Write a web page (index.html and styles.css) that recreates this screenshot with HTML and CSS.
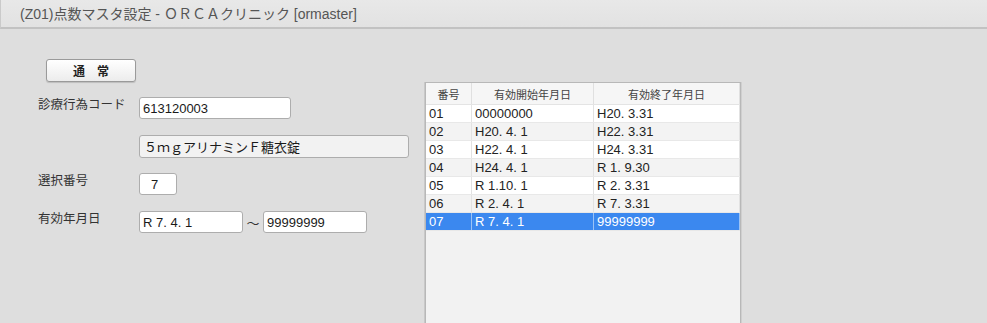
FILE: index.html
```html
<!DOCTYPE html>
<html lang="ja">
<head>
<meta charset="UTF-8">
<meta name="viewport" content="width=device-width, initial-scale=1.0">
<title>(Z01)点数マスタ設定</title>
<link rel="stylesheet" href="styles.css">
</head>
<body>
<div class="titlebar">(Z01)点数マスタ設定 - ＯＲＣＡクリニック [ormaster]</div>

<div class="main">
    <div class="left">
        <button type="button" class="mode-btn">通　常</button>

        <div class="form-grid">
            <label class="lbl" for="code">診療行為コード</label>
            <div class="row"><input type="text" id="code" class="field w-code" value="613120003"></div>

            <span class="lbl"></span>
            <div class="row"><input type="text" class="field w-name readonly" value="５ｍｇアリナミンＦ糖衣錠" readonly></div>

            <label class="lbl" for="sel">選択番号</label>
            <div class="row"><input type="text" id="sel" class="field w-sel" value="7"></div>

            <label class="lbl" for="from">有効年月日</label>
            <div class="row">
                <input type="text" id="from" class="field w-date" value="R 7. 4. 1">
                <span class="tilde">～</span>
                <input type="text" class="field w-date" value="99999999">
            </div>
        </div>
    </div>

    <div class="list">
        <table>
            <thead>
                <tr><th class="c1">番号</th><th class="c2">有効開始年月日</th><th class="c3">有効終了年月日</th></tr>
            </thead>
            <tbody>
                <tr><td>01</td><td>00000000</td><td>H20. 3.31</td></tr>
                <tr><td>02</td><td>H20. 4. 1</td><td>H22. 3.31</td></tr>
                <tr><td>03</td><td>H22. 4. 1</td><td>H24. 3.31</td></tr>
                <tr><td>04</td><td>H24. 4. 1</td><td>R 1. 9.30</td></tr>
                <tr><td>05</td><td>R 1.10. 1</td><td>R 2. 3.31</td></tr>
                <tr><td>06</td><td>R 2. 4. 1</td><td>R 7. 3.31</td></tr>
                <tr class="selected"><td>07</td><td>R 7. 4. 1</td><td>99999999</td></tr>
            </tbody>
        </table>
    </div>
</div>
</body>
</html>
```

FILE: styles.css
```css
body {
    margin: 0;
    height: 323px;
    overflow: hidden;
    background-color: #dedede;
    font-family: "Liberation Sans", "Noto Sans CJK JP", sans-serif;
    color: #222;
}

.titlebar {
    height: 27px;
    line-height: 28px;
    padding-left: 19px;
    font-size: 14px;
    color: #555;
    background: linear-gradient(#e8e8e8, #e2e2e2);
    border-left: 1px solid #cacaca;
    border-bottom: 2px solid #c2c2c2;
}

.main {
    display: flex;
}

.left {
    width: 425px;
    padding-top: 30px;
    padding-left: 38px;
    box-sizing: border-box;
}

.mode-btn {
    display: block;
    margin-left: 8px;
    width: 90px;
    height: 23px;
    padding: 0;
    font-family: inherit;
    font-size: 12px;
    font-weight: bold;
    color: #222;
    background: linear-gradient(#ffffff, #ececec);
    border: 1px solid #9a9a9a;
    border-radius: 3px;
    box-shadow: 0 1px 1px rgba(0, 0, 0, 0.15);
}

.form-grid {
    display: grid;
    grid-template-columns: 101px auto;
    grid-auto-rows: 22px;
    row-gap: 16px;
    margin-top: 15px;
}

.lbl {
    font-size: 12.5px;
    color: #333;
    line-height: 1;
    padding-top: 2px;
}

.row {
    display: flex;
    align-items: center;
}

.field {
    box-sizing: border-box;
    height: 22px;
    padding: 0 3px;
    font-family: inherit;
    font-size: 13px;
    color: #1a1a1a;
    background-color: #fff;
    border: 1px solid #adadad;
    border-radius: 3px;
    outline: none;
}

.w-code { width: 152px; }
.w-name { width: 270px; height: 23px; padding-left: 4px; }
.w-sel { width: 38px; padding-left: 11px; }
.w-date { width: 104px; }

.readonly {
    background-color: #f2f2f2;
}

.tilde {
    width: 20px;
    text-align: center;
    font-size: 13px;
    color: #333;
}

.list {
    margin-top: 53px;
    width: 316px;
    height: 260px;
    box-sizing: border-box;
    background-color: #f2f2f2;
    border: 1px solid #b8b8b8;
    box-shadow: -1px 0 0 #c8c8c8, 1px 0 0 #cfcfcf;
}

table {
    border-collapse: collapse;
    width: 100%;
    table-layout: fixed;
}

th {
    height: 21px;
    padding: 0;
    font-size: 11px;
    font-weight: normal;
    color: #444;
    background-color: #f6f6f6;
    border-right: 1px solid #e0e0e0;
    border-bottom: 1px solid #e4e4e4;
}

.c1 { width: 45px; }
.c2 { width: 121px; }

td {
    height: 17px;
    padding: 0 0 0 3px;
    font-size: 13px;
    line-height: 17px;
    color: #222;
    border-right: 1px solid #e2e2e2;
    border-bottom: 1px solid #e8e8e8;
    white-space: pre;
}

tbody tr:nth-child(odd) {
    background-color: #fff;
}

tbody tr:nth-child(even) {
    background-color: #f3f3f3;
}

tbody tr.selected {
    background-color: #3b88ef;
}

tr.selected td {
    color: #fff;
    border-right-color: #9cc3f5;
}
```
